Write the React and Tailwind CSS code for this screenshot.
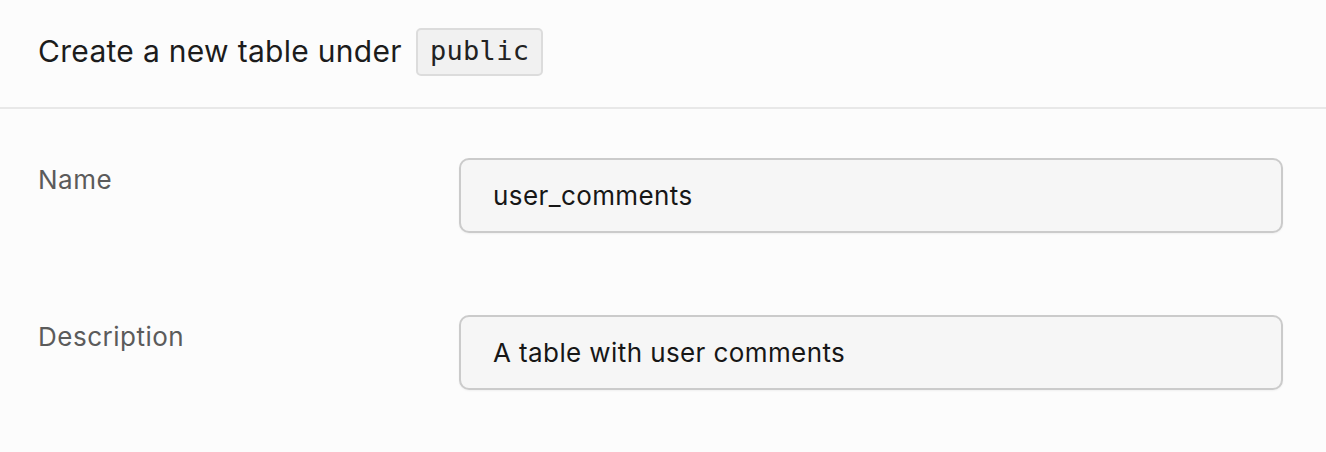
import React from 'react'

const fields = [
  { label: 'Name', value: 'user_comments' },
  { label: 'Description', value: 'A table with user comments' },
]

export default function App() {
  return (
    <div className="min-h-[452px] w-[1326px] bg-[#fcfcfc] font-['Inter','Noto_Sans',sans-serif]">
      {/* Header */}
      <div className="flex h-[109px] items-center gap-[14px] border-b-2 border-[#e8e8e8] pl-[38px] pb-[4px]">
        <h1 className="text-[30px] tracking-[0.3px] text-[#1c1c1c]">Create a new table under</h1>
        <code className="flex h-[48px] items-center rounded-[5px] border-2 border-[#dcdcdc] bg-[#f1f1f1] px-[12px] font-['DejaVu_Sans_Mono',monospace] text-[27px] tracking-[0.3px] text-[#222]">
          public
        </code>
      </div>

      {/* Fields */}
      <div className="flex flex-col gap-[82px] pt-[49px] pl-[38px] pr-[43px]">
        {fields.map((f) => (
          <div key={f.label} className="flex">
            <label className="w-[421px] shrink-0 pt-[2px] text-[26px] tracking-[0.5px] text-[#5b5b5b]">{f.label}</label>
            <div className="flex h-[75px] flex-1 items-center rounded-[10px] border-2 border-[#cbcbcb] bg-[#f6f6f6] px-[32px] text-[26px] tracking-[0.4px] text-[#171717] shadow-[0_1px_2px_rgba(0,0,0,0.05)]">
              {f.value}
            </div>
          </div>
        ))}
      </div>
    </div>
  )
}
